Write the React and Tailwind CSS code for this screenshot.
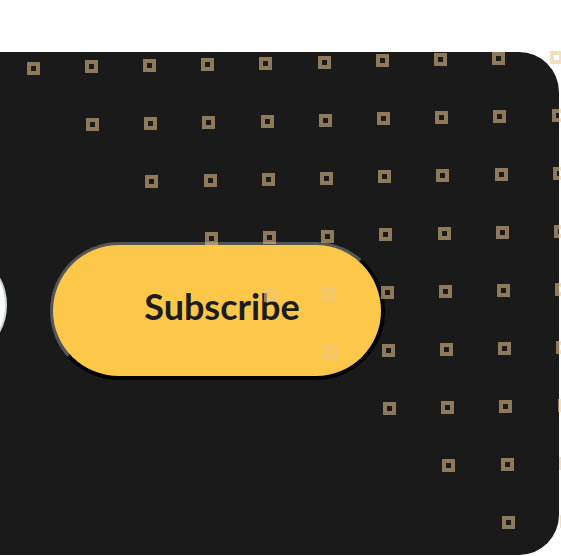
import React from "react";

const squares = [];
for (let r = 0; r <= 8; r++) {
  for (let c = r; c <= 9; c++) {
    const x = 33 + 58.2 * c + 1.2 * r;
    const y = 68 - 1.2 * c + 58 * r;
    squares.push({ x, y, key: `${r}-${c}` });
  }
}

export default function App() {
  return (
    <div className="relative w-[561px] h-[556px] bg-white overflow-hidden" style={{ fontFamily: "Lato, 'Noto Sans', sans-serif" }}>
      <div className="pt-[52px]">
        <div className="w-[559px] h-[503px] bg-[#1a1a1a] rounded-r-[40px] overflow-hidden flex items-center pt-[15px]">
          <div className="shrink-0 w-[300px] -ml-[293px] h-[112px] rounded-full bg-white border-2 border-gray-300 -mt-[12px]" />
          <button className="shrink-0 ml-[43px] w-[335px] h-[138px] rounded-full bg-[#fdc84a] border-t-[3px] border-l-[3px] border-r-4 border-b-4 border-t-[#555555] border-l-[#555555] border-r-black border-b-black flex items-center justify-center pl-[10px] pb-[10px] text-[36px] font-bold text-[#1c1c1c]">
            Subscribe
          </button>
        </div>
      </div>
      <div className="absolute inset-0 pointer-events-none">
        {squares.map((s) => (
          <div
            key={s.key}
            className="absolute w-[13px] h-[13px] border-[4px] border-[rgba(236,196,142,0.56)] blur-[0.7px]"
            style={{ left: s.x - 6.5, top: s.y - 6.5 }}
          />
        ))}
      </div>
    </div>
  );
}
